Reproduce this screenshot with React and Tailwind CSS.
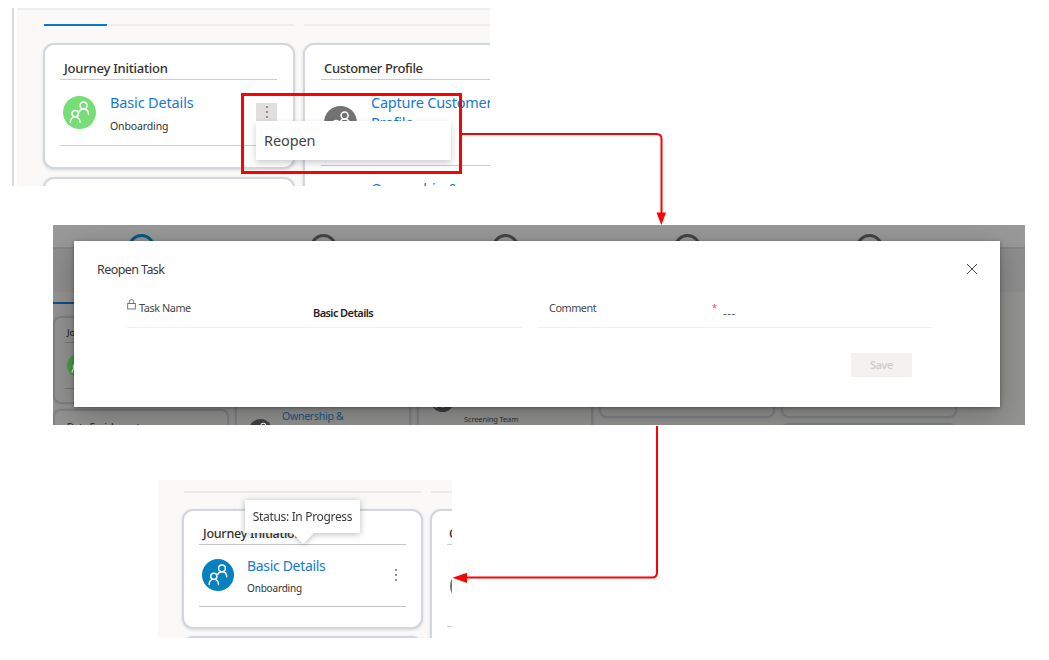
import React from "react";
import clsx from "clsx";

function People({ size = "size-[33px]", color = "bg-[#77dd76]" }) {
  return (
    <div className={clsx("flex shrink-0 items-center justify-center rounded-full text-white", size, color)}>
      <svg viewBox="0 0 33 33" className="size-full" fill="none" stroke="currentColor" strokeWidth="1.500" strokeLinecap="round">
        <circle cx="12.200" cy="17.800" r="3.200" />
        <path d="M7.400 26.200c0-3 1.900-5.200 4.800-5.200s4.800 2.200 4.800 5.200" />
        <circle cx="20.600" cy="9.600" r="3.500" />
        <path d="M16.200 15.800c.900-1.700 2.300-2.700 4.400-2.700 2.900 0 4.900 2.100 4.900 5.300" />
      </svg>
    </div>
  );
}

function Dots() {
  return (
    <div className="flex flex-col items-center gap-[3px]">
      <i className="size-[2px] bg-[#94918f]" />
      <i className="size-[2px] bg-[#94918f]" />
      <i className="size-[2px] bg-[#94918f]" />
    </div>
  );
}

const cardLook = "border-2 border-[#d3d7dc] bg-white shadow-[0_1px_3px_#d3d7dc]";

function StageMenu() {
  return (
    <section className="absolute left-[11px] top-[8px] flex h-[178px] w-[479px] overflow-hidden">
      <div className="ml-px w-[2px] shrink-0 bg-[#d9d9db]" />
      <div className="ml-[3px] flex w-[473px] shrink-0 flex-col border-t-2 border-[#eeeeee] bg-[#faf9f8] pl-[27px] pt-[14px]">
        <div className="flex shrink-0 gap-[10px]">
          <div className="flex h-[2px] w-[250px] shrink-0 bg-[#ededed]">
            <div className="w-[63px] bg-[#0f78d4]" />
          </div>
          <div className="h-[2px] w-[187px] shrink-0 bg-[#ededed]" />
        </div>
        <div className="-ml-px mt-[17px] flex gap-[8px]">
          <div className="flex w-[252px] shrink-0 flex-col gap-[8px]">
            <div className={clsx("flex h-[126px] flex-col rounded-[11px] pl-[15px] pr-[16px]", cardLook)}>
              <h3 className="mt-[13px] pl-1 text-[13px] font-medium leading-[20px] tracking-[-0.220px] text-[#323130]">Journey Initiation</h3>
              <div className="mt-px flex h-[67px] border-y-[1.500px] border-[#cdcdcd] pl-[3px]">
                <div className="pt-[16px]"><People /></div>
                <div className="ml-[14px] flex flex-col">
                  <div className="mt-[12px] whitespace-nowrap text-[14.500px] leading-[20px] tracking-[-0.15px] text-[#1779d2]">Basic Details</div>
                  <div className="mt-[5px] text-[10.500px] leading-[18px] tracking-[-0.130px] text-[#333]">Onboarding</div>
                </div>
                <div className="ml-auto mt-[23px] flex h-[18px] w-[21px] items-center justify-center bg-[#e1dfdd]"><Dots /></div>
              </div>
            </div>
            <div className={clsx("h-[60px] rounded-[11px]", cardLook)} />
          </div>
          <div className={clsx("flex h-[180px] w-[240px] shrink-0 flex-col rounded-[11px] pl-[16px]", cardLook)}>
            <h3 className="mt-[13px] pl-[3px] text-[13px] font-medium leading-[20px] tracking-[-0.370px] text-[#323130]">Customer Profile</h3>
            <div className="mt-px flex h-[87px] border-y-[1.500px] border-[#cdcdcd] pl-[3px]">
              <div className="pt-[26px]"><People color="bg-[#747373]" /></div>
              <div className="ml-[14px] mt-[12px] text-[14.500px] leading-[20px] tracking-[-0.220px] text-[#1779d2]">
                <div className="whitespace-nowrap">Capture Customer</div>
                <div>Profile</div>
              </div>
            </div>
            <div className="mt-[12px] pl-[50px] text-[14.500px] leading-[20px] tracking-[-0.100px] text-[#1779d2]">Ownership &amp;</div>
          </div>
        </div>
      </div>
    </section>
  );
}

const dimCard = "border-2 border-[#7f8184] shadow-[0_0_2px_#7f8184]";

function Field({ width, children }) {
  return <div className={clsx("flex h-[28px] border-b border-[#efefef] text-[11px] leading-[16px] text-[#4a4846]", width)}>{children}</div>;
}

function ReopenDialog() {
  return (
    <section className="absolute left-[53px] top-[225px] h-[200px] w-[972px] overflow-hidden bg-[#939391]">
      <div className="flex h-[22px] justify-start gap-[155px] bg-[#999999] pl-[75px] pt-[9px]">
        <div className="size-[27px] shrink-0 rounded-full border-[3px] border-[#075985]" />
        <div className="size-[27px] shrink-0 rounded-full border-[3px] border-[#444]" />
        <div className="size-[27px] shrink-0 rounded-full border-[3px] border-[#444]" />
        <div className="size-[27px] shrink-0 rounded-full border-[3px] border-[#444]" />
        <div className="size-[27px] shrink-0 rounded-full border-[3px] border-[#444]" />
      </div>
      <div className="relative h-[45px] border-t-2 border-[#858587] bg-[#8e8e8e]" />
      <div className="grid grid-cols-[176px_176px_176px_176px_176px] gap-[6px]">
        <div className="flex flex-col pt-[10px]">
          <div className="h-[2px] bg-[#0b4f8c]" />
          <div className={clsx("mt-[12px] flex h-[88px] flex-col rounded-[8px] pl-[10px]", dimCard)}>
            <div className="mt-[8px] pl-[2px] text-[9px] font-medium leading-[14px] text-[#1c2a3c]">Journey Initiation</div>
            <div className="mt-[2px] flex h-[47px] items-center border-y border-[#777] pl-[2px]"><People size="size-[23px]" color="bg-[#46a046]" /></div>
          </div>
          <div className={clsx("mt-[5px] h-[60px] rounded-[8px] pl-[12px] pt-[9px] text-[9.500px] font-medium leading-[14px] tracking-[-0.250px] text-[#242424]", dimCard)}>Data Enrichment</div>
        </div>
        <div className={clsx("flex h-[160px] items-start pl-[12px] pt-[114px]", dimCard)}>
          <div className="pt-[11px]"><People size="size-[23px]" color="bg-[#414141]" /></div>
          <div className="ml-[10px] whitespace-nowrap text-[10.500px] leading-[16px] tracking-[-0.250px] text-[#1d5288]">Ownership &amp;</div>
        </div>
        <div className={clsx("flex h-[160px] items-start pl-[12px] pt-[95px]", dimCard)}>
          <People size="size-[23px]" color="bg-[#414141]" />
          <div className="ml-[10px] whitespace-nowrap pt-[23px] text-[7.500px] leading-[14px] tracking-[-0.140px] text-[#303030]">Screening Team</div>
        </div>
        <div className={clsx("h-[126px] rounded-[8px]", dimCard)} />
        <div className="flex flex-col gap-[5px]">
          <div className={clsx("h-[126px] shrink-0 rounded-[8px]", dimCard)} />
          <div className={clsx("h-[50px] rounded-[8px]", dimCard)} />
        </div>
      </div>
      <div className="absolute left-[21px] top-[16px] flex h-[166px] w-[926px] flex-col bg-white shadow-[0_8px_28px_rgba(0,0,0,0.26),0_1px_4px_rgba(0,0,0,0.35)]">
        <div className="flex items-center justify-between pl-[23px] pr-[22px] pt-[18px]">
          <h2 className="text-[12.500px] leading-[22px] tracking-[-0.580px] text-[#3b3a39]">Reopen Task</h2>
          <svg viewBox="0 0 12 12" className="mb-[2px] size-[12px]" stroke="#454545" strokeWidth="1"><path d="M1 1l10 10M11 1L1 11" /></svg>
        </div>
        <div className="mt-[19px] flex gap-[15px] pl-[53px]">
          <Field width="w-[396px]">
            <svg viewBox="0 0 9 11" className="mt-[-1px] h-[11px] w-[9px]" fill="none" stroke="#666" strokeWidth="0.900"><rect x=".700" y="4.500" width="7.600" height="5.500" /><path d="M2.300 4.500V2.700a2.200 2.200 0 0 1 4.400 0v1.800" /></svg>
            <span className="ml-[3px] w-[174px] text-[10.800px] tracking-[-0.400px]">Task Name</span>
            <b className="pt-[5px] text-[11px] font-semibold tracking-[-0.580px] text-[#252423]">Basic Details</b>
          </Field>
          <Field width="w-[394px]">
            <span className="ml-[11px] w-[163px] text-[10.800px] tracking-[-0.440px]">Comment</span>
            <span className="w-[11px] text-[9px] leading-[15px] text-[#f04040]">*</span>
            <span className="pt-[5px] tracking-[0.700px]">---</span>
          </Field>
        </div>
        <button className="ml-[777px] mt-[25px] h-[24px] w-[61px] rounded-[1px] bg-[#f3f2f1] text-[11px] font-semibold leading-[24px] tracking-[-0.450px] text-[#d0cecc]">Save</button>
      </div>
    </section>
  );
}

function ProgressCard() {
  return (
    <section className="absolute left-[158px] top-[480px] flex h-[158px] w-[294px] flex-col overflow-hidden bg-[#faf9f8] pl-[24px] pt-[11px]">
      <div className="ml-[2px] flex gap-[10px]">
        <div className="h-[2px] w-[237px] shrink-0 bg-[#e9e9e9]" />
        <div className="h-[2px] w-[60px] shrink-0 bg-[#e9e9e9]" />
      </div>
      <div className="mt-[16px] flex gap-[7px]">
        <div className="flex w-[241px] shrink-0 flex-col gap-[7px]">
          <div className={clsx("flex h-[120px] flex-col rounded-[11px] px-[15px]", cardLook)}>
            <h3 className="mt-[13px] pl-[4px] text-[12.500px] font-medium leading-[20px] tracking-[-0.250px] text-[#323130]">Journey Initiation</h3>
            <div className="flex h-[63px] border-y border-[#c6c6c6] pl-[3px]">
              <div className="pt-[14px]"><People size="size-[32px]" color="bg-[#0581bf]" /></div>
              <div className="ml-[13px] flex flex-col">
                <div className="mt-[11px] whitespace-nowrap text-[14px] leading-[20px] tracking-[-0.320px] text-[#1779d2]">Basic Details</div>
                <div className="mt-[3px] text-[10px] leading-[18px] tracking-[-0.180px] text-[#333]">Onboarding</div>
              </div>
              <div className="ml-auto mr-[9px] mt-[24px]"><Dots /></div>
            </div>
          </div>
          <div className={clsx("h-[40px] rounded-[11px]", cardLook)} />
        </div>
        <div className={clsx("flex h-[160px] w-[120px] shrink-0 flex-col rounded-[11px] pl-[15px]", cardLook)}>
          <h3 className="mt-[13px] pl-[2px] text-[12.500px] font-medium leading-[20px] text-[#323130]">Customer</h3>
          <div className="flex h-[83px] border-y border-[#cdcdcd] pl-[3px] pt-[25px]">
            <People size="size-[32px]" color="bg-[#747373]" />
          </div>
        </div>
      </div>
      <div className="absolute left-[87px] top-[20px] flex h-[33px] w-[115px] items-center justify-center bg-white text-[12px] tracking-[-0.330px] text-[#3b3a39] drop-shadow-[0_1px_3px_rgba(0,0,0,0.28)]">
        <span className="whitespace-nowrap">Status: In Progress</span>
        <svg className="absolute left-[46px] top-[32px] h-[13px] w-[24px]" viewBox="0 0 24 13"><path d="M0 0h24L12 12z" fill="#fff" /></svg>
      </div>
    </section>
  );
}

export default function App() {
  return (
    <main className="relative h-[660px] w-[1049px] overflow-hidden bg-white font-['Noto_Sans','Open_Sans',sans-serif]">
      <StageMenu />
      <ReopenDialog />
      <ProgressCard />
      <div className="absolute left-[256px] top-[121px] flex h-[39px] w-[195px] items-center bg-white pl-[8px] text-[14.500px] tracking-[-0.1px] text-[#444] shadow-[0_3px_7px_rgba(0,0,0,0.2)]">Reopen</div>
      <div className="absolute left-[241px] top-[93px] h-[81px] w-[221px] border-[3px] border-[#ff0000]" />
      <svg className="absolute inset-0 h-[660px] w-[1049px]" viewBox="0 0 1049 660" fill="none" stroke="#ff0000" strokeWidth="2">
        <path d="M462 134H656.500Q661.500 134 661.500 139V214" />
        <path d="M656.500 212.500H666L661.300 225z" fill="#ff0000" stroke="none" />
        <path d="M657 426V572.500Q657 577.500 652 577.500H466" />
        <path d="M467 572.700V583L452.500 577.800z" fill="#ff0000" stroke="none" />
      </svg>
    </main>
  );
}
